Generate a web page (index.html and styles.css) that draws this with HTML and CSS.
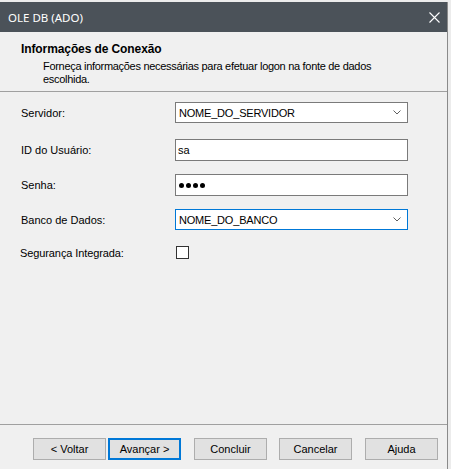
FILE: index.html
```html
<!DOCTYPE html>
<html lang="pt">
<head>
<meta charset="utf-8">
<title>OLE DB (ADO)</title>
<link rel="stylesheet" href="styles.css">
</head>
<body>
<div class="window">
  <div class="titlebar">
    <span class="title">OLE DB (ADO)</span>
    <svg class="close" width="11" height="11" viewBox="0 0 11 11"><path d="M0.5 0.5 L10.5 10.5 M10.5 0.5 L0.5 10.5" stroke="#fff" stroke-width="1.1" fill="none"/></svg>
  </div>
  <div class="header">
    <div class="header-title">Informações de Conexão</div>
    <div class="header-desc">Forneça informações necessárias para efetuar logon na fonte de dados escolhida.</div>
  </div>
  <div class="form">
    <div class="row">
      <span class="label">Servidor:</span>
      <div class="field combo"><span class="value">NOME_DO_SERVIDOR</span>
        <svg class="chev" width="8" height="5" viewBox="0 0 8 5"><path d="M0.5 0.5 L4 4 L7.5 0.5" stroke="#606060" stroke-width="1" fill="none"/></svg>
      </div>
    </div>
    <div class="row gap16">
      <span class="label">ID do Usuário:</span>
      <div class="field text"><span class="value">sa</span></div>
    </div>
    <div class="row gap13">
      <span class="label">Senha:</span>
      <div class="field text"><span class="dots"><i></i><i></i><i></i><i></i></span></div>
    </div>
    <div class="row gap13">
      <span class="label">Banco de Dados:</span>
      <div class="field combo focused"><span class="value">NOME_DO_BANCO</span>
        <svg class="chev" width="8" height="5" viewBox="0 0 8 5"><path d="M0.5 0.5 L4 4 L7.5 0.5" stroke="#606060" stroke-width="1" fill="none"/></svg>
      </div>
    </div>
    <div class="row gap16">
      <span class="label label-check">Segurança Integrada:</span>
      <span class="checkbox"></span>
    </div>
  </div>
  <div class="footer">
    <button class="btn">&lt; Voltar</button>
    <button class="btn btn-default">Avançar &gt;</button>
    <button class="btn sep">Concluir</button>
    <button class="btn sep12">Cancelar</button>
    <button class="btn sep">Ajuda</button>
  </div>
</div>
</body>
</html>
```
FILE: styles.css
```css
* { box-sizing: border-box; }
html, body { margin: 0; }
body {
  background: #ececec;
  padding-top: 2px;
  font-family: "Liberation Sans", Arial, sans-serif;
  font-size: 11px;
  color: #000;
  height: 469px;
  overflow: hidden;
}
.window {
  width: 448px;
  height: 467px;
  border-right: 1px solid #8a8a8a;
  background: #f0f0f0;
  display: flex;
  flex-direction: column;
}
.titlebar {
  height: 30px;
  flex: none;
  background: #4b5259;
  color: #fff;
  display: flex;
  align-items: center;
  justify-content: space-between;
  padding: 0 7px 0 8px;
  font-family: "Noto Sans", "Liberation Sans", sans-serif;
  font-size: 11.5px;
}
.close { display: block; }
.header {
  height: 60px;
  flex: none;
  border-bottom: 1px solid #a0a0a0;
  padding: 10px 0 0 21px;
}
.header-title {
  font-weight: bold;
  font-size: 12px;
  line-height: 14px;
  letter-spacing: -0.1px;
}
.header-desc {
  margin: 4px 0 0 22px;
  width: 365px;
  line-height: 13px;
  letter-spacing: -0.3px;
}
.form {
  flex: 1;
  padding: 10px 0 0 21px;
}
.row {
  display: flex;
  align-items: center;
}
.gap16 { margin-top: 16px; }
.gap13 { margin-top: 13px; }
.label { width: 154px; flex: none; }
.label-check { margin-left: -1px; width: 155px; letter-spacing: -0.1px; }
.field {
  width: 233px;
  background: #fff;
  border: 1px solid #7a7a7a;
  display: flex;
  align-items: center;
  justify-content: space-between;
}
.combo { height: 21px; padding: 0 6px 0 3px; }
.combo .value { letter-spacing: -0.2px; }
.text { height: 22px; padding-left: 2px; }
.focused { border-color: #0078d7; }
.chev { display: block; }
.dots { display: flex; gap: 2px; margin-left: 1px; }
.dots i {
  display: block;
  width: 5px;
  height: 5px;
  border-radius: 50%;
  background: #000;
}
.checkbox {
  width: 13px;
  height: 13px;
  border: 1px solid #333;
  background: #fff;
  margin-left: 1px;
}
.footer {
  height: 45px;
  flex: none;
  border-top: 1px solid #a0a0a0;
  padding: 13px 0 0 33px;
  display: flex;
  align-items: flex-start;
}
.btn {
  width: 73px;
  height: 22px;
  background: #e1e1e1;
  border: 1px solid #adadad;
  font-family: "Liberation Sans", Arial, sans-serif;
  font-size: 11px;
  color: #000;
  padding: 0;
  margin: 0;
}
.btn-default {
  border: 2px solid #0078d7;
  margin-left: 2px;
}
.sep { margin-left: 13px; }
.sep12 { margin-left: 12px; }
```
